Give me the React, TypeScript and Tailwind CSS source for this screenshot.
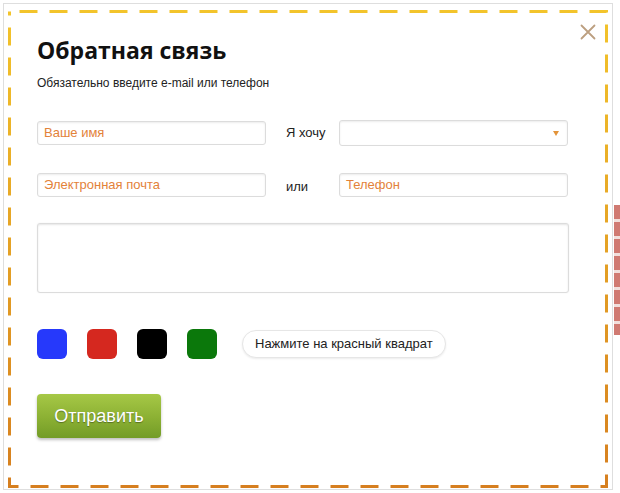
import React from "react";

const font = { fontFamily: '"Liberation Sans", Arial, sans-serif' };

function Field({ placeholder, w }: { placeholder: string; w: string }) {
  return (
    <div
      className={`${w} h-[24px] rounded-[3px] border border-[#dcdcdc] bg-white shadow-[inset_0_1px_2px_rgba(0,0,0,0.08)] flex items-center px-[6px] text-[13px] text-[#e3823a]`}
    >
      {placeholder}
    </div>
  );
}

export default function App() {
  return (
    <div className="relative w-[620px] h-[493px] bg-white overflow-hidden" style={font}>
      {/* page behind the dialog, peeking out at the right */}
      <div className="absolute right-0 top-[205px] w-[6px] h-[130px] bg-[repeating-linear-gradient(180deg,#d07a72_0px,#d07a72_14px,#f1dfdc_14px,#f1dfdc_17px)]" />

      <div className="relative ml-[3px] mt-[3px] w-[610px] h-[487px] border border-[#dedede] bg-white">
        <svg className="absolute left-0 top-0 pointer-events-none" width="608" height="485">
          <defs>
            <linearGradient id="dash" x1="0" y1="0" x2="0" y2="1">
              <stop offset="0" stopColor="#f3c42b" />
              <stop offset="1" stopColor="#d67f1f" />
            </linearGradient>
          </defs>
          <rect
            x="5.5"
            y="7.5"
            width="597"
            height="475"
            fill="none"
            stroke="url(#dash)"
            strokeWidth="3"
            strokeDasharray="18 12"
            strokeDashoffset="-10"
          />
        </svg>

        {/* close */}
        <svg className="absolute left-[576px] top-[20px]" width="16" height="16" viewBox="0 0 16 16">
          <path d="M1.5 1.5 L14.5 14.5 M14.5 1.5 L1.5 14.5" stroke="#bc9f80" strokeWidth="1.8" strokeLinecap="round" />
        </svg>

        <div className="pl-[33px] pt-[33px]">
          <h2
            className="text-[23px] leading-[26px] font-bold text-[#111]"
            style={{ fontFamily: '"Open Sans", "Liberation Sans", sans-serif' }}
          >
            Обратная связь
          </h2>
          <p className="mt-[13px] text-[12px] leading-[14px] text-[#222]">Обязательно введите e-mail или телефон</p>

          <div className="mt-[30px] flex items-center h-[26px]">
            <Field placeholder="Ваше имя" w="w-[229px]" />
            <span className="ml-[20px] w-[53px] text-[13px] text-[#222]">Я хочу</span>
            <div className="w-[229px] h-[26px] rounded-[3px] border border-[#dcdcdc] bg-white shadow-[inset_0_1px_2px_rgba(0,0,0,0.08)] flex items-center justify-end pr-[8px]">
              <svg width="6" height="5" viewBox="0 0 6 5">
                <path d="M0 0 H6 L3 5 Z" fill="#e3943a" />
              </svg>
            </div>
          </div>

          <div className="mt-[27px] flex items-center h-[24px]">
            <Field placeholder="Электронная почта" w="w-[229px]" />
            <span className="ml-[20px] w-[53px] text-[13px] text-[#222] pt-[4px]">или</span>
            <Field placeholder="Телефон" w="w-[229px]" />
          </div>

          <div className="mt-[26px] w-[532px] h-[70px] rounded-[3px] border border-[#dcdcdc] bg-white shadow-[inset_0_1px_2px_rgba(0,0,0,0.1),0_0_2px_rgba(0,0,0,0.06)]" />

          <div className="mt-[36px] flex items-center gap-[20px] h-[30px]">
            <div className="w-[30px] h-[30px] rounded-[6px] bg-[#2639fb]" />
            <div className="w-[30px] h-[30px] rounded-[6px] bg-[#d5281f]" />
            <div className="w-[30px] h-[30px] rounded-[6px] bg-[#000]" />
            <div className="w-[30px] h-[30px] rounded-[6px] bg-[#0b780b]" />
            <button className="ml-[5px] h-[28px] px-[12px] rounded-full border border-[#e6e6e6] bg-white shadow-[0_1px_2px_rgba(0,0,0,0.08)] text-[13px] text-[#222]">
              Нажмите на красный квадрат
            </button>
          </div>

          <button className="mt-[35px] w-[124px] h-[44px] rounded-[4px] bg-[linear-gradient(180deg,#a6c846_0%,#8bb033_55%,#739c27_100%)] shadow-[0_2px_3px_rgba(0,0,0,0.25)] text-[18px] text-white [text-shadow:0_1px_1px_rgba(0,0,0,0.35)]">
            Отправить
          </button>
        </div>
      </div>
    </div>
  );
}
